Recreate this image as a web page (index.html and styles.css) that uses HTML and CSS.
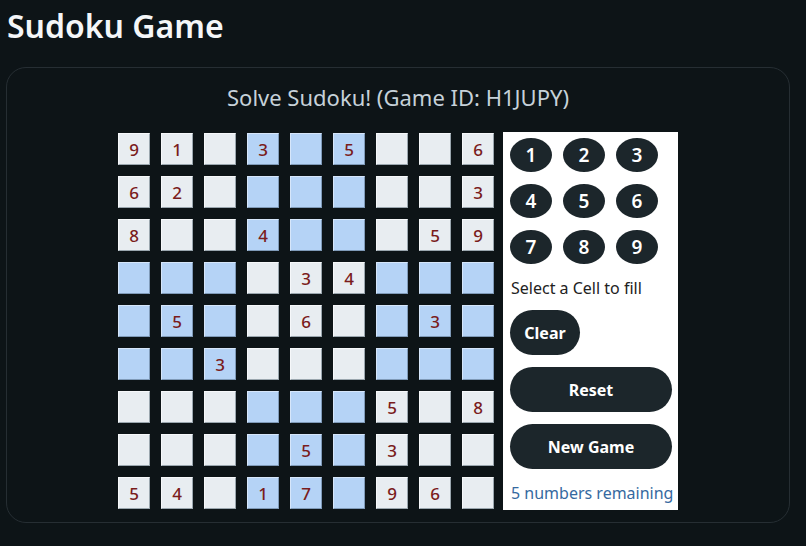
FILE: index.html
```html
<!DOCTYPE html>
<html lang="en">
<head>
<meta charset="utf-8">
<title>Sudoku Game</title>
<link rel="stylesheet" href="styles.css">
</head>
<body>
<div class="page">
  <h1 class="title">Sudoku Game</h1>
  <div class="card">
    <h2 class="subtitle">Solve Sudoku! (Game ID: H1JUPY)</h2>
    <div class="game">
      <div class="board">
        <div class="cell">9</div><div class="cell">1</div><div class="cell"></div>
        <div class="cell alt">3</div><div class="cell alt"></div><div class="cell alt">5</div>
        <div class="cell"></div><div class="cell"></div><div class="cell">6</div>

        <div class="cell">6</div><div class="cell">2</div><div class="cell"></div>
        <div class="cell alt"></div><div class="cell alt"></div><div class="cell alt"></div>
        <div class="cell"></div><div class="cell"></div><div class="cell">3</div>

        <div class="cell">8</div><div class="cell"></div><div class="cell"></div>
        <div class="cell alt">4</div><div class="cell alt"></div><div class="cell alt"></div>
        <div class="cell"></div><div class="cell">5</div><div class="cell">9</div>

        <div class="cell alt"></div><div class="cell alt"></div><div class="cell alt"></div>
        <div class="cell"></div><div class="cell">3</div><div class="cell">4</div>
        <div class="cell alt"></div><div class="cell alt"></div><div class="cell alt"></div>

        <div class="cell alt"></div><div class="cell alt">5</div><div class="cell alt"></div>
        <div class="cell"></div><div class="cell">6</div><div class="cell"></div>
        <div class="cell alt"></div><div class="cell alt">3</div><div class="cell alt"></div>

        <div class="cell alt"></div><div class="cell alt"></div><div class="cell alt">3</div>
        <div class="cell"></div><div class="cell"></div><div class="cell"></div>
        <div class="cell alt"></div><div class="cell alt"></div><div class="cell alt"></div>

        <div class="cell"></div><div class="cell"></div><div class="cell"></div>
        <div class="cell alt"></div><div class="cell alt"></div><div class="cell alt"></div>
        <div class="cell">5</div><div class="cell"></div><div class="cell">8</div>

        <div class="cell"></div><div class="cell"></div><div class="cell"></div>
        <div class="cell alt"></div><div class="cell alt">5</div><div class="cell alt"></div>
        <div class="cell">3</div><div class="cell"></div><div class="cell"></div>

        <div class="cell">5</div><div class="cell">4</div><div class="cell"></div>
        <div class="cell alt">1</div><div class="cell alt">7</div><div class="cell alt"></div>
        <div class="cell">9</div><div class="cell">6</div><div class="cell"></div>
      </div>
      <div class="panel">
        <div class="numpad">
          <button class="num">1</button><button class="num">2</button><button class="num">3</button>
          <button class="num">4</button><button class="num">5</button><button class="num">6</button>
          <button class="num">7</button><button class="num">8</button><button class="num">9</button>
        </div>
        <p class="hint">Select a Cell to fill</p>
        <button class="btn clear">Clear</button>
        <button class="btn wide">Reset</button>
        <button class="btn wide">New Game</button>
        <p class="remaining">5 numbers remaining</p>
      </div>
    </div>
  </div>
</div>
</body>
</html>
```

FILE: styles.css
```css
* { box-sizing: border-box; }

html, body {
  margin: 0;
  background: #0d1417;
}

body {
  font-family: "Noto Sans", "Open Sans", sans-serif;
  color: #e8edf1;
}

.page {
  padding: 0 16px 0 6px;
}

.title {
  margin: 0;
  padding: 4px 0 0 1px;
  font-size: 32px;
  line-height: 44px;
  font-weight: 600;
  color: #f4f6f8;
}

.card {
  margin-top: 19px;
  height: 456px;
  border: 1px solid #262e33;
  border-radius: 20px;
  padding-top: 16px;
}

.subtitle {
  margin: 0;
  text-align: center;
  font-size: 22px;
  line-height: 26px;
  font-weight: 400;
  color: #c6d1d9;
}

.game {
  margin-top: 22px;
  display: flex;
  justify-content: center;
  align-items: center;
}

.board {
  display: grid;
  grid-template-columns: repeat(9, 32px);
  grid-auto-rows: 32px;
  gap: 11px;
}

.cell {
  width: 32px;
  height: 32px;
  background: #e8edf1;
  border: 1px solid #f6f8fa;
  border-right-color: #9aa6ae;
  border-bottom-color: #9aa6ae;
  color: #7a1c1c;
  font-size: 17px;
  font-weight: 500;
  display: flex;
  align-items: center;
  justify-content: center;
}

.cell.alt {
  background: #b5d3f6;
  border-color: #d6e6fa;
  border-right-color: #7f9ab8;
  border-bottom-color: #7f9ab8;
}

.panel {
  margin-left: 9px;
  width: 175px;
  background: #ffffff;
  padding: 6px 7px 5px 7px;
  display: flex;
  flex-direction: column;
  align-items: flex-start;
}

.numpad {
  display: grid;
  grid-template-columns: repeat(3, 42px);
  grid-auto-rows: 34px;
  column-gap: 11px;
  row-gap: 12px;
}

button {
  font-family: inherit;
  border: none;
  cursor: pointer;
}

.num {
  width: 42px;
  height: 34px;
  border-radius: 50%;
  background: #1c262b;
  color: #ffffff;
  font-size: 19px;
  font-weight: 600;
  padding: 0;
}

.hint {
  margin: 12px 0 0 1px;
  font-size: 16px;
  line-height: 24px;
  color: #222222;
}

.btn {
  margin-top: 12px;
  height: 45px;
  border-radius: 23px;
  background: #1c262b;
  color: #ffffff;
  font-size: 16px;
  font-weight: 700;
  padding: 0;
}

.clear {
  margin-top: 10px;
  width: 70px;
}

.wide {
  width: 162px;
}

.remaining {
  margin: 12px 0 0 1px;
  font-size: 16px;
  line-height: 24px;
  color: #3569a0;
  white-space: nowrap;
}
```
